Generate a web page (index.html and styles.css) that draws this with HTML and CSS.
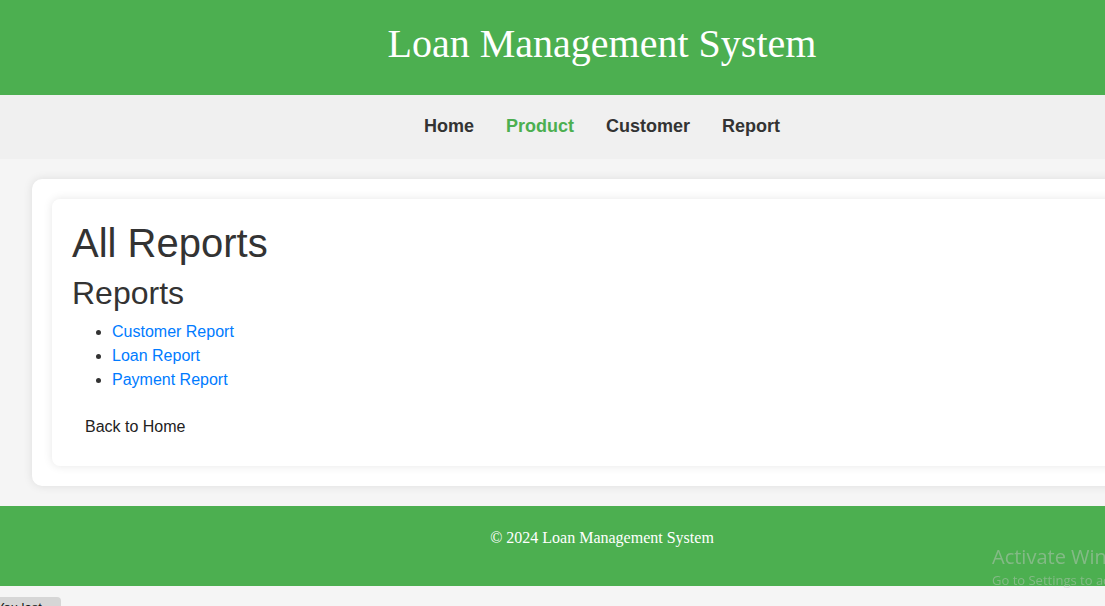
FILE: index.html
```html
<!DOCTYPE html>
<html lang="en">
<head>
<meta charset="utf-8">
<title>All Reports - Loan Management System</title>
<link rel="stylesheet" href="styles.css">
</head>
<body>
<div class="page">
  <header class="site-header">
    <h1 class="site-title">Loan Management System</h1>
  </header>
  <nav class="main-nav">
    <a href="#" class="nav-link">Home</a>
    <a href="#" class="nav-link active">Product</a>
    <a href="#" class="nav-link">Customer</a>
    <a href="#" class="nav-link">Report</a>
  </nav>
  <main class="main">
    <section class="outer-card">
      <div class="inner-card">
        <h1 class="page-title">All Reports</h1>
        <h2 class="section-title">Reports</h2>
        <ul class="report-list">
          <li><a href="#">Customer Report</a></li>
          <li><a href="#">Loan Report</a></li>
          <li><a href="#">Payment Report</a></li>
        </ul>
        <a href="#" class="back-link">Back to Home</a>
      </div>
    </section>
  </main>
  <footer class="site-footer">
    <p>&copy; 2024 Loan Management System</p>
  </footer>
  <div class="below">
    <span class="tab-button">You last</span>
  </div>
</div>
<div class="activate">
  <div class="activate-title">Activate Windows</div>
  <div class="activate-sub">Go to Settings to activate Windows.</div>
</div>
</body>
</html>
```
FILE: styles.css
```css
html {
  overflow: hidden;
}

body {
  margin: 0;
  background: #f5f5f5;
  font-family: "Liberation Sans", Arial, sans-serif;
  color: #333;
}

.page {
  width: 1204px;
}

.site-header {
  background: #4caf50;
  color: #fff;
  text-align: center;
  padding: 20px 0 28px;
}

.site-title {
  margin: 0;
  font-family: "Liberation Serif", "Times New Roman", serif;
  font-weight: normal;
  font-size: 40px;
}

.main-nav {
  background: #f0f0f0;
  display: flex;
  justify-content: center;
  gap: 32px;
  padding: 21px 0 22px;
}

.nav-link {
  color: #333;
  text-decoration: none;
  font-weight: bold;
  font-size: 18px;
}

.nav-link.active {
  color: #4caf50;
}

.main {
  padding: 20px 32px;
}

.outer-card {
  background: #fff;
  border-radius: 10px;
  box-shadow: 0 0 10px rgba(0, 0, 0, 0.1);
  padding: 20px;
}

.inner-card {
  background: #fff;
  border-radius: 8px;
  box-shadow: 0 0 10px rgba(0, 0, 0, 0.1);
  padding: 20px;
}

.page-title {
  margin: 2px 0 9px;
  font-size: 40px;
  font-weight: normal;
}

.section-title {
  margin: 0;
  font-size: 32px;
  font-weight: normal;
}

.report-list {
  margin: 8px 0 15px;
  padding-left: 40px;
  line-height: 24px;
}

.report-list a {
  color: #007bff;
  text-decoration: none;
}

.back-link {
  display: inline-block;
  padding: 10px 13px 9px;
  color: #222;
  text-decoration: none;
  line-height: 20px;
}

.site-footer {
  background: #4caf50;
  color: #fff;
  text-align: center;
  padding: 19px 0 19px;
  font-family: "Liberation Serif", "Times New Roman", serif;
  font-size: 16px;
}

.site-footer p {
  margin: 0 0 16px;
  line-height: 1.6;
}

.below {
  padding-top: 11px;
}

.tab-button {
  display: inline-block;
  background: #d6d6d6;
  border-radius: 0 4px 0 0;
  padding: 3px 19px 3px 0;
  margin-left: -4px;
  font-size: 13px;
  color: #111;
}

.activate {
  position: fixed;
  left: 992px;
  top: 543px;
  white-space: nowrap;
  color: rgba(200, 200, 200, 0.45);
  font-family: "Open Sans", sans-serif;
}

.activate-title {
  font-size: 20px;
  line-height: 28px;
}

.activate-sub {
  font-size: 13px;
  line-height: 18px;
}
```
